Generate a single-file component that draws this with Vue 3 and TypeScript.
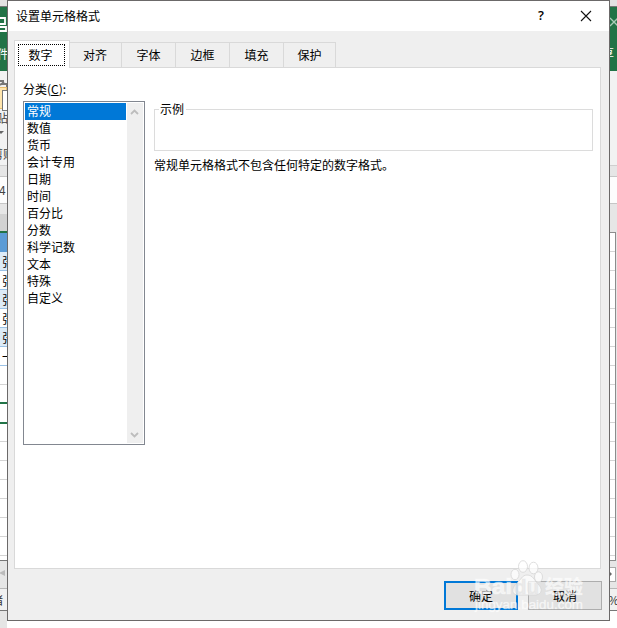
<script setup lang="ts">
import { ref } from 'vue'

const tabs = ['数字', '对齐', '字体', '边框', '填充', '保护']
const categories = ['常规', '数值', '货币', '会计专用', '日期', '时间', '百分比', '分数', '科学记数', '文本', '特殊', '自定义']
const activeTab = ref(0)
const selected = ref(0)
const names = ['张', '张', '张', '张', '张', '一']
const emptyRows = ['plain', 'above', 'picked', 'plain', 'plain', 'plain', 'plain', 'plain', 'plain', 'plain']
</script>

<template>
  <main class="desktop">
    <section class="excel">
      <div class="caption"></div>
      <div class="ribbon-head">
        <svg class="save" width="7" height="16" viewBox="0 0 7 16"><path d="M0 1H5V7H0M0 10H6V14H0" fill="none" stroke="#fff" stroke-width="1.800" /></svg>
        <span class="file-tab">件</span>
        <svg class="app-close" width="10" height="10" viewBox="0 0 10 10"><path d="M1 1L9 9M9 1L1 9" stroke="#a9cdb8" stroke-width="1.3" /></svg>
        <span class="share">享</span>
      </div>
      <div class="ribbon">
        <svg class="cut" width="8" height="8" viewBox="0 0 8 8"><path d="M0 2H3V5H7V8M0 6L4 3" fill="none" stroke="#777" stroke-width="2" /></svg>
        <span class="paste-icon"></span>
        <span class="paste">贴</span>
        <span class="drop"></span>
        <span class="clipboard">剪贴</span>
      </div>
      <div class="gap"></div>
      <div class="formula"><span>4</span></div>
      <div class="headers"><div class="column-head"></div></div>
      <div class="sheet">
        <div class="sheet-left">
          <div class="head-cell"></div>
          <div v-for="(name, i) in names" :key="i" class="cell named" :class="{ banded: i % 2 === 0 && i < 5 }"><span>{{ name }}</span></div>
          <div v-for="(kind, i) in emptyRows" :key="'e' + i" class="cell" :class="kind"></div>
        </div>
        <div class="sheet-right"><div v-for="n in 17" :key="n" class="cell"></div></div>
      </div>
      <div class="sheet-nav"><span class="nav-left"></span><span class="nav-right"></span></div>
      <div class="status"><span class="ready">绪</span><span class="zoom">%</span></div>
      <div class="below"></div>
    </section>

    <section class="dialog">
      <header class="title">
        <span>设置单元格格式</span>
        <button class="help" aria-label="帮助">?</button>
        <button class="close" aria-label="关闭">
          <svg width="12" height="12" viewBox="0 0 12 12"><path d="M1 1L11 11M11 1L1 11" stroke="#111" stroke-width="1.1" /></svg>
        </button>
      </header>
      <div class="body">
        <nav class="tabs">
          <button v-for="(tab, i) in tabs" :key="tab" class="tab" :class="{ active: i === activeTab }" @click="activeTab = i"><span>{{ tab }}</span></button>
        </nav>
        <div class="page">
          <div class="label">分类(<u>C</u>):</div>
          <div class="columns">
            <div class="listbox">
              <ul>
                <li v-for="(item, i) in categories" :key="item" :class="{ selected: i === selected }" @click="selected = i">{{ item }}</li>
              </ul>
              <div class="scrollbar">
                <svg width="9" height="6" viewBox="0 0 9 6"><path d="M1 5L4.500 1.500L8 5" fill="none" stroke="#bdbdbd" stroke-width="1.800" /></svg>
                <svg width="9" height="6" viewBox="0 0 9 6"><path d="M1 1L4.500 4.500L8 1" fill="none" stroke="#bdbdbd" stroke-width="1.800" /></svg>
              </div>
            </div>
            <div class="detail">
              <div class="sample"><span>示例</span></div>
              <p>常规单元格格式不包含任何特定的数字格式。</p>
            </div>
          </div>
        </div>
        <footer>
          <button class="primary">确定</button>
          <button>取消</button>
        </footer>
      </div>
    </section>

    <svg class="watermark" width="116" height="60" viewBox="0 0 116 60">
      <g class="paw">
        <ellipse cx="49" cy="6.500" rx="4.500" ry="5.800" /><ellipse cx="59.500" cy="8" rx="4.500" ry="5.800" />
        <ellipse cx="41" cy="14.500" rx="4" ry="5.200" /><ellipse cx="64.500" cy="17" rx="4" ry="5.200" />
        <path d="M53 15C48 15 47 20 42 24C37 29 38 35 44 35H62C68 34 69 29 64 24C60 20 59 15 53 15Z" />
      </g>
      <g class="mark">
        <text class="brand" x="0" y="33.500" font-size="22" textLength="38" lengthAdjust="spacingAndGlyphs">Bai</text>
        <text class="brand du" x="40" y="33.500" font-size="20" textLength="25" lengthAdjust="spacingAndGlyphs">du</text>
        <text class="cn" x="71" y="34" font-size="19" font-weight="700" textLength="38">经验</text>
        <text class="url" x="1" y="48.500" font-size="12" textLength="108" lengthAdjust="spacingAndGlyphs">jingyan.baidu.com</text>
      </g>
    </svg>
  </main>
</template>

<style>
body {
  margin: 0;
  overflow: hidden;
}
</style>

<style scoped>
* {
  box-sizing: border-box;
}
.desktop {
  position: relative;
  width: 617px;
  height: 628px;
  overflow: hidden;
  font: 12px/17px "Noto Sans CJK SC", sans-serif;
  color: #000;
}
button {
  margin: 0;
  padding: 0;
  border: 0;
  border-radius: 0;
  background: none;
  font: inherit;
  color: inherit;
}
.excel {
  display: flex;
  flex-direction: column;
  height: 628px;
}
.excel > div {
  position: relative;
  flex: none;
}
.excel > div > span,
.excel > div > svg {
  position: absolute;
  white-space: nowrap;
}
.caption {
  height: 7px;
  background: #e2e2e2;
  border-bottom: 1px solid #777;
}
.ribbon-head {
  height: 64px;
  background: #217346;
  color: #fff;
}
.save { left: 0; top: 10px; }
.excel .file-tab { left: -3px; top: 38px; }
.app-close { left: 609px; top: 10px; }
.excel .share { left: 602px; top: 37px; }
.ribbon {
  height: 95px;
  background: #f2f2f2;
  border-bottom: 1px solid #cfcfcf;
  color: #444;
}
.cut { left: 0; top: 8px; }
.paste-icon {
  left: -8px;
  top: 16px;
  width: 15px;
  height: 22px;
  border: 1px solid #e8bd6d;
  background: #ffe5ad;
}
.paste-icon::after {
  content: '';
  position: absolute;
  left: 9px;
  top: 2px;
  width: 8px;
  height: 19px;
  border: 1px solid #777;
  background: #fff;
}
.excel .paste { left: -4px; top: 38px; }
.drop {
  left: -2px;
  top: 60px;
  border: 3px solid transparent;
  border-top-color: #666;
}
.excel .clipboard { left: -9px; top: 74px; }
.gap {
  height: 11px;
  background: #e6e6e6;
  border-bottom: 1px solid #c6c6c6;
}
.formula {
  height: 27px;
  background: #fdfdfd;
  border-bottom: 1px solid #c6c6c6;
  color: #444;
}
.excel .formula span { left: -1px; top: 4px; }
.headers {
  height: 28px;
  background: #e6e6e6;
  padding-top: 10px;
}
.column-head {
  width: 8px;
  height: 18px;
  background: #d2d2d2;
}
.sheet {
  height: 329px;
  display: flex;
  justify-content: space-between;
  background: #e6e6e6;
}
.sheet-left {
  width: 8px;
  margin-top: -1px;
  border-top: 2px solid #217346;
  border-bottom: 1px solid #777;
  background: #fff;
  overflow: hidden;
}
.head-cell {
  height: 19px;
  background: #5b9bd5;
}
.cell {
  height: 19px;
  overflow: hidden;
  background: #fff;
  border-bottom: 1px solid #d4d4d4;
}
.named {
  border-color: #9bc2e6;
}
.named span {
  display: block;
  padding-left: 2px;
  line-height: 19px;
  white-space: nowrap;
}
.banded { background: #ddebf7; }
.above { border-bottom: 2px solid #217346; }
.picked {
  height: 20px;
  border-bottom: 2px solid #217346;
}
.picked + .cell { height: 18px; }
.sheet-right {
  width: 8px;
  margin-right: 1px;
  border: solid #8c8c8c;
  border-width: 1px 1px 1px 0;
  background: #fff;
  overflow: hidden;
}
.sheet-nav {
  height: 28px;
  background: #e6e6e6;
  border-bottom: 1px solid #b8b8b8;
}
.nav-left {
  left: -4px;
  top: 9px;
  border: 3px solid transparent;
  border-right: 6px solid #bbb;
}
.nav-right {
  right: 1px;
  top: 6px;
  width: 8px;
  height: 15px;
  border: 1px solid #aaa;
  background: #fff;
}
.nav-right::after {
  content: '';
  position: absolute;
  left: 1px;
  top: 4px;
  border: 2px solid transparent;
  border-left-color: #666;
}
.status {
  height: 22px;
  background: #f1f1f1;
  border-bottom: 1px solid #777;
  color: #333;
}
.excel .ready { left: -9px; top: 2px; }
.excel .zoom { left: 608px; top: 2px; }
.below {
  height: 18px;
  background: linear-gradient(90deg, #e5e5e5 7px, #fff 7px);
}
.dialog {
  position: absolute;
  left: 7px;
  top: 0;
  width: 603px;
  height: 621px;
  border: 1px solid #6b6969;
  background: #efefef;
}
.title {
  display: flex;
  align-items: center;
  height: 30px;
  padding-left: 8px;
  background: #fff;
}
.title > span {
  flex: 1;
  padding-bottom: 2px;
}
.help {
  width: 12px;
  margin-right: 32px;
  padding-bottom: 2px;
  font-family: "Open Sans", sans-serif;
  font-size: 13px;
  font-weight: 600;
}
.close {
  width: 14px;
  height: 14px;
  margin-right: 16px;
  padding-bottom: 1px;
  display: grid;
  place-items: center;
}
.body { padding: 9px 8px 0 6px; }
.tabs {
  display: flex;
  align-items: flex-end;
  height: 28px;
}
.tab {
  width: 54px;
  height: 26px;
  padding-bottom: 1px;
  border: 1px solid #d9d9d9;
  border-left: 0;
}
.tab:nth-child(2) {
  width: 52px;
  padding-right: 1px;
}
.tab:last-child { width: 52px; }
.tab.active {
  position: relative;
  width: 56px;
  height: 28px;
  padding: 3px;
  border-left: 1px solid #d9d9d9;
  border-bottom: 0;
  background: #fff;
}
.tab.active span {
  display: block;
  width: 47px;
  height: 22px;
  padding-right: 2px;
  line-height: 19px;
  border: 1px dotted #000;
}
.page {
  height: 502px;
  margin-top: -1px;
  padding: 12px 7px 0 8px;
  border: 1px solid #d9d9d9;
  background: #fff;
}
.label {
  height: 21px;
  line-height: 17px;
}
.columns {
  display: flex;
  gap: 9px;
}
.listbox {
  display: flex;
  width: 122px;
  height: 344px;
  padding: 1px;
  border: 1px solid #828790;
}
ul {
  flex: 1;
  margin: 0;
  padding: 0;
  list-style: none;
}
li {
  height: 17px;
  padding-left: 2px;
  line-height: 15px;
}
.selected {
  margin-right: 1px;
  background: #0078d7;
  color: #fff;
}
.scrollbar {
  display: flex;
  flex-direction: column;
  align-items: center;
  justify-content: space-between;
  width: 16px;
  padding: 6px 1px 5px 0;
  background: #efefef;
}
.detail {
  flex: 1;
  padding-top: 8px;
}
.sample {
  height: 42px;
  border: 1px solid #dcdcdc;
  padding-left: 4px;
}
.sample span {
  display: block;
  width: 27px;
  margin-top: -10px;
  padding-left: 1px;
  background: #fff;
}
.detail p {
  margin: 5px 0 0;
}
footer {
  display: flex;
  justify-content: flex-end;
  gap: 10px;
  margin: 12px -1px 0 0;
}
footer button {
  width: 74px;
  height: 29px;
  padding-bottom: 1px;
  border: 1px solid #adadad;
  background: #e1e1e1;
}
footer .primary {
  border: 2px solid #0078d7;
}
.watermark {
  position: absolute;
  left: 474px;
  top: 560px;
  pointer-events: none;
}
.mark {
  fill: #fff;
  fill-opacity: 0.65;
  stroke: #fff;
  stroke-opacity: 0.3;
  stroke-width: 0.7;
}
.brand {
  font-family: "Liberation Sans", sans-serif;
  font-weight: 700;
  stroke-width: 1.2;
}
.du {
  fill: #e3e3e3;
  stroke: #ddd;
}
.cn { font-family: "Noto Sans CJK SC", sans-serif; }
.url { font-family: "Liberation Sans", sans-serif; }
.paw {
  fill: #fff;
  fill-opacity: 0.7;
  stroke: #d6d6d6;
  stroke-width: 0.8;
}
</style>
